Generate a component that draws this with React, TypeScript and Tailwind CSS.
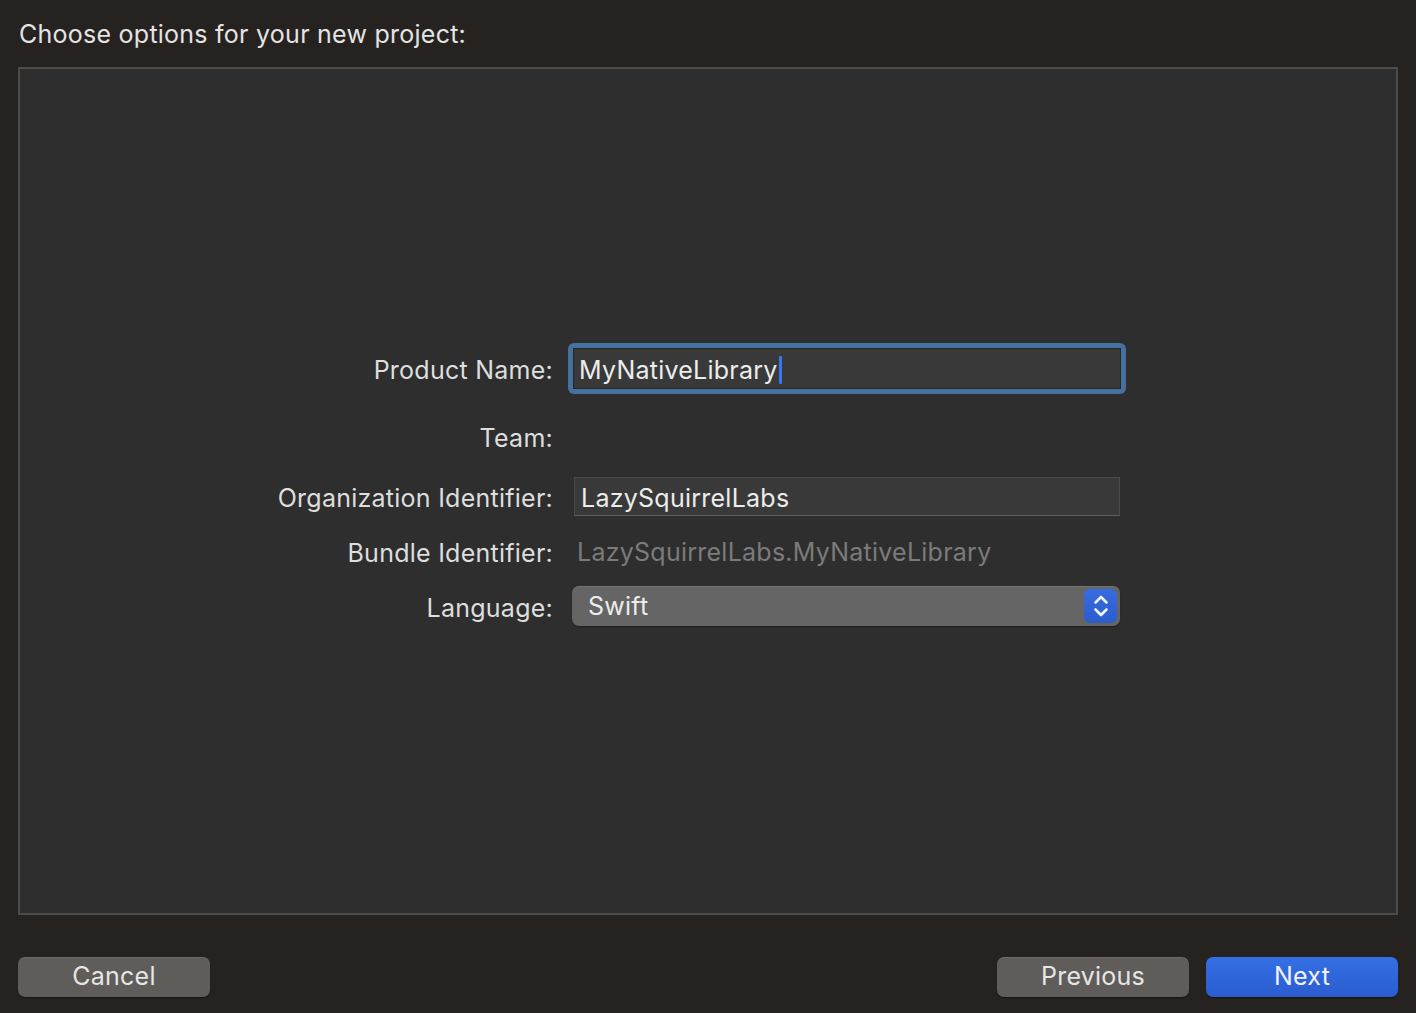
import { useState } from 'react'

function Label({ children }: { children: React.ReactNode }) {
  return <div className="flex items-center justify-end pt-[3px] text-[25px] leading-[30px] tracking-[0.25px] text-[#dedede]">{children}</div>
}

function Stepper() {
  return (
    <div className="flex h-[34px] w-[33px] items-center justify-center rounded-[6px] bg-gradient-to-b from-[#376ce0] to-[#2b5dcc]">
      <svg width="16" height="26" viewBox="0 0 16 26" fill="none" stroke="#eef2ff" strokeWidth="2.6" strokeLinecap="round" strokeLinejoin="round">
        <path d="M2.5 9.5 L8 4 L13.5 9.5" />
        <path d="M2.5 16.5 L8 22 L13.5 16.5" />
      </svg>
    </div>
  )
}

function Button({ label, primary }: { label: string; primary?: boolean }) {
  return (
    <button
      className={
        primary
          ? 'h-[40px] w-[192px] rounded-[7px] bg-gradient-to-b from-[#3470e4] to-[#2b5ccf] text-[25px] tracking-[0.25px] text-[#eef2fb] shadow-[0_1px_1px_rgba(0,0,0,0.4)]'
          : 'h-[40px] w-[192px] rounded-[7px] bg-[#5f5c5a] text-[25px] tracking-[0.25px] text-[#e6e6e6] shadow-[inset_0_1px_0_rgba(255,255,255,0.08),0_1px_1px_rgba(0,0,0,0.4)]'
      }
    >
      {label}
    </button>
  )
}

export default function App() {
  const [name] = useState('MyNativeLibrary')

  return (
    <div className="flex h-[1013px] w-[1416px] flex-col bg-[#252220] px-[18px] font-['Inter',_'Liberation_Sans',_sans-serif] antialiased">
      <div className="flex h-[67px] items-center pl-[1px] pt-[2px] text-[25px] tracking-[0.25px] text-[#e4e4e4]">Choose options for your new project:</div>

      <div className="flex h-[848px] flex-col border-2 border-[#4b4b4b] bg-[#2e2e2e] pt-[274px]">
        <div className="grid grid-cols-[533px_558px] gap-x-[15px]">
          <Label>Product Name:</Label>
          <div className="h-[51px] rounded-[6px] bg-[#46709e] p-[5px]">
            <div className="flex h-full items-center border border-[#262626] bg-[#393939] pl-[5px] pt-[2px] text-[25px] leading-[30px] tracking-[0.25px] text-[#ececec]">
              {name}
              <span className="ml-[1px] h-[28px] w-[3px] rounded-[1px] bg-[#3478f6]" />
            </div>
          </div>

          <div className="col-span-2 h-[22px]" />
          <Label>Team:</Label>
          <div className="h-[40px]" />

          <div className="col-span-2 h-[21px]" />
          <Label>Organization Identifier:</Label>
          <div className="mx-[6px] flex h-[39px] items-center border border-[#4a4a4a] border-b-[#5c5c5c] bg-[#393939] pl-[6px] pt-[2px] text-[25px] leading-[30px] tracking-[0.25px] text-[#ececec]">
            LazySquirrelLabs
          </div>

          <div className="col-span-2 h-[15px]" />
          <Label>Bundle Identifier:</Label>
          <div className="flex h-[40px] items-center pl-[9px] pt-[2px] text-[25px] leading-[30px] tracking-[0.25px] text-[#7b7b7b]">LazySquirrelLabs.MyNativeLibrary</div>

          <div className="col-span-2 h-[15px]" />
          <Label>Language:</Label>
          <div className="ml-[4px] mr-[6px] flex h-[40px] items-center justify-between rounded-[7px] bg-[#656565] pl-[16px] pr-[3px] text-[25px] leading-[30px] tracking-[0.25px] text-[#ececec] shadow-[inset_0_1px_0_rgba(255,255,255,0.1),0_1px_1px_rgba(0,0,0,0.35)]">
            <span>Swift</span>
            <Stepper />
          </div>
        </div>
      </div>

      <div className="mt-[42px] flex items-center">
        <Button label="Cancel" />
        <div className="flex-1" />
        <div className="flex gap-[17px]">
          <Button label="Previous" />
          <Button label="Next" primary />
        </div>
      </div>
    </div>
  )
}
